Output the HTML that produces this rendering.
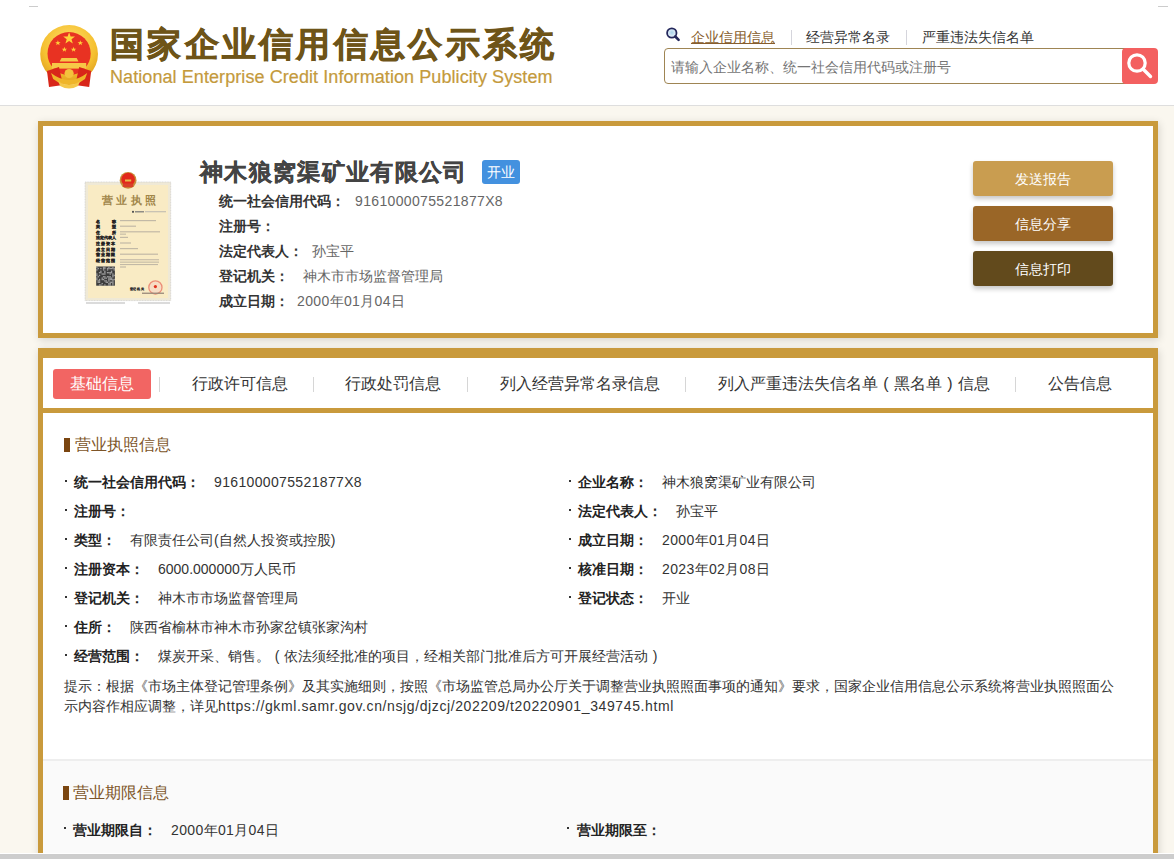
<!DOCTYPE html>
<html><head><meta charset="utf-8">
<style>
*{margin:0;padding:0;box-sizing:border-box}
html,body{width:1174px;height:859px;overflow:hidden}
body{position:relative;background:#faf7ef;font-family:"Liberation Sans",sans-serif;font-size:14px;color:#333}
.abs{position:absolute;white-space:nowrap}
#hdr{position:absolute;left:0;top:0;width:1174px;height:106px;background:#fff;border-bottom:1px solid #dedede}
.title{left:110px;top:24px;font-size:34px;font-weight:bold;color:#6e5418;line-height:40px;letter-spacing:3.3px;-webkit-text-stroke:0.7px #6e5418}
.etitle{left:110px;top:66px;font-size:18px;color:#c49a3c;line-height:22px;letter-spacing:0.08px;-webkit-text-stroke:0.2px #c49a3c}
.hlink{top:28px;font-size:14px;line-height:18px;color:#333}
.hsep{top:30px;width:1px;height:15px;background:#d5d5dc}
#search{position:absolute;left:664px;top:48px;width:470px;height:36px;border:1px solid #9f8553;border-radius:4px;background:#fff}
#sbtn{position:absolute;left:1122px;top:48px;width:36px;height:36px;background:#f36060;border-radius:4px}
.ph{left:671px;top:58px;font-size:14px;line-height:18px;color:#757575}
.card{position:absolute;left:38px;width:1120px;background:#fff;border:5px solid #c99a3c;box-shadow:1px 2px 8px rgba(0,0,0,.15)}
#c1{top:121px;height:217px}
#c2{top:348px;height:520px;border-top-width:10px}
.ctitle{left:200px;top:157px;font-size:23px;font-weight:bold;color:#444;line-height:30px;letter-spacing:1.35px;-webkit-text-stroke:0.4px #444}
.badge{position:absolute;left:482px;top:160px;width:38px;height:24px;background:#4391df;border-radius:3px;color:#fff;font-size:14px;line-height:24px;text-align:center}
.r{font-size:14px;line-height:18px}
.r b{color:#333}
.r span{color:#666}
.btn{position:absolute;left:973px;width:140px;height:35px;border-radius:3px;color:#fff;font-size:14px;line-height:33px;padding-top:2px;text-align:center;box-shadow:0 3px 5px rgba(0,0,0,.22)}
.tabbar{position:absolute;left:43px;top:408px;width:1110px;height:5px;background:#c99a3c}
.tab{top:374px;font-size:16px;line-height:20px;color:#333}
.tsep{top:377px;width:1px;height:15px;background:#d6d6d6}
#tab1{position:absolute;left:53px;top:369px;width:98px;height:30px;background:#f26563;border-radius:3px;color:#fff;font-size:16px;line-height:30px;text-align:center}
.sh{font-size:16px;line-height:20px;color:#7d5528}
.shbar{position:absolute;width:6px;height:14px;background:#7a4510}
.row{font-size:14px;line-height:18px;color:#333}
.row b{font-weight:bold;color:#222}
.dot{position:absolute;width:2px;height:2px;background:#333}
#sec2{position:absolute;left:43px;top:759px;width:1110px;height:100px;background:#fafafa;border-top:2px solid #eee}
#scroll{position:absolute;left:0;top:853px;width:1174px;height:6px;background:#cdcdcd;border-top:1px solid #fff}
.num{letter-spacing:0.35px}
.pc{display:inline-block;width:1em;text-align:center}
</style></head><body>
<div id="hdr"></div>
<div class="abs" style="left:29px;top:6px;width:9px;height:1px;background:#ccc"></div>
<div class="abs" style="left:1158px;top:6px;width:10px;height:1px;background:#ccc"></div>

<!-- emblem -->
<svg class="abs" style="left:30px;top:15px" width="80" height="80" viewBox="0 0 80 80">
  <defs>
    <radialGradient id="gold" cx="50%" cy="35%" r="65%"><stop offset="0" stop-color="#ffe070"/><stop offset="0.7" stop-color="#f5c030"/><stop offset="1" stop-color="#e0a020"/></radialGradient>
  </defs>
  <circle cx="39.1" cy="39" r="28.9" fill="url(#gold)"/>
  <circle cx="39.1" cy="38.6" r="21.6" fill="#e83222"/>
  <polygon points="39.1,17.3 40.6,21.6 45,21.6 41.5,24.3 42.8,28.6 39.1,26 35.4,28.6 36.7,24.3 33.2,21.6 37.6,21.6" fill="#ffd23a"/>
  <polygon points="27.9,25.3 28.6,27.2 30.6,27.2 29,28.4 29.6,30.3 27.9,29.1 26.2,30.3 26.8,28.4 25.2,27.2 27.2,27.2" fill="#ffd23a"/>
  <polygon points="50.3,25.3 51,27.2 53,27.2 51.4,28.4 52,30.3 50.3,29.1 48.6,30.3 49.2,28.4 47.6,27.2 49.6,27.2" fill="#ffd23a"/>
  <polygon points="34.4,31.8 35.1,33.7 37.1,33.7 35.5,34.9 36.1,36.8 34.4,35.6 32.7,36.8 33.3,34.9 31.7,33.7 33.7,33.7" fill="#ffd23a"/>
  <polygon points="43.6,31.8 44.3,33.7 46.3,33.7 44.7,34.9 45.3,36.8 43.6,35.6 41.9,36.8 42.5,34.9 40.9,33.7 42.9,33.7" fill="#ffd23a"/>
  <path d="M31.5 43 L46.7 43 L48.5 46.5 L29.7 46.5 Z" fill="#f7c847"/>
  <rect x="22" y="48" width="34.2" height="5.6" fill="#f7c847"/>
  <path d="M17 56 L29 52 L33 70 L19 72 Z" fill="#d8261a"/>
  <path d="M61.2 56 L49.2 52 L45.2 70 L59.2 72 Z" fill="#d8261a"/>
  <path d="M21 58 Q39 72 57.2 58 L55 64 Q39 76 23.2 64 Z" fill="#efb52a"/>
  <circle cx="39.1" cy="58.5" r="4.6" fill="#f4c23c"/>
  <path d="M28 66 Q39 74 50.2 66 L48 71 Q39 76 30.2 71 Z" fill="#f5c84a"/>
</svg>
<div class="abs title">国家企业信用信息公示系统</div>
<div class="abs etitle">National Enterprise Credit Information Publicity System</div>

<!-- header right -->
<svg class="abs" style="left:666px;top:26.5px" width="15" height="15" viewBox="0 0 15 15">
  <defs><radialGradient id="lens" cx="50%" cy="45%" r="55%"><stop offset="0" stop-color="#a9d3ea"/><stop offset="1" stop-color="#f2f6ff"/></radialGradient></defs>
  <circle cx="5.8" cy="6" r="4.7" fill="url(#lens)" stroke="#24285c" stroke-width="1.8"/>
  <line x1="9.3" y1="9.5" x2="12.6" y2="12.8" stroke="#24285c" stroke-width="2.6" stroke-linecap="round"/>
</svg>
<div class="abs hlink" style="left:691px;color:#875d2c;text-decoration:underline">企业信用信息</div>
<div class="abs hsep" style="left:791px"></div>
<div class="abs hlink" style="left:806px">经营异常名录</div>
<div class="abs hsep" style="left:906px"></div>
<div class="abs hlink" style="left:922px">严重违法失信名单</div>
<div id="search"></div>
<div class="abs ph">请输入企业名称、统一社会信用代码或注册号</div>
<div id="sbtn"><svg width="36" height="36" viewBox="0 0 36 36" style="position:absolute;left:0;top:0">
  <circle cx="15" cy="15" r="8.2" fill="none" stroke="#fff" stroke-width="3.2"/>
  <line x1="21.5" y1="21.5" x2="28.5" y2="28.5" stroke="#fff" stroke-width="3.4" stroke-linecap="round"/>
</svg></div>

<!-- card 1 -->
<div class="card" id="c1"></div>
<svg class="abs" style="left:80px;top:165px" width="100" height="142" viewBox="0 0 100 142">
    <rect x="5.1" y="17" width="85.6" height="118.6" fill="#efe9d6" stroke="#cfcfcf" stroke-width="0.8" stroke-dasharray="1 0.6"/>
  <rect x="8" y="20" width="80" height="113" fill="#f9ebc4"/>
  <circle cx="48.1" cy="15.3" r="8.4" fill="#c8903a"/>
  <circle cx="48.1" cy="14.6" r="6.8" fill="#e2281b"/>
  <rect x="43" y="18.6" width="10.2" height="3.6" rx="1" fill="#d8402a"/>
  <rect x="45" y="14.5" width="6.2" height="2" fill="#e7b94a"/>
  <text x="21.5" y="39.2" font-size="10.5" font-weight="bold" letter-spacing="3.6" fill="#a08548" font-family="Liberation Serif, serif">营业执照</text>
  <rect x="52" y="45.9" width="2" height="1.8" fill="#555"/>
  <rect x="55" y="46.2" width="9" height="1.2" fill="#777"/>
  <rect x="65" y="46.4" width="21" height="0.8" fill="#aaa"/>
  <g font-size="4.2" font-weight="bold" fill="#222" stroke="#222" stroke-width="0.25" font-family="Liberation Sans, sans-serif">
    <text x="15.5" y="57.6">名</text><text x="32.3" y="57.6">称</text>
    <text x="15.5" y="63.2">类</text><text x="32.3" y="63.2">型</text>
    <text x="15.5" y="68.8">住</text><text x="32.3" y="68.8">所</text>
    <text x="15.5" y="74.4" letter-spacing="0">法定代表人</text>
    <text x="15.5" y="80" letter-spacing="1.2">注册资本</text>
    <text x="15.5" y="85.6" letter-spacing="1.2">成立日期</text>
    <text x="15.5" y="91.2" letter-spacing="1.2">营业期限</text>
    <text x="15.5" y="96.8" letter-spacing="1.2">经营范围</text>
  </g>
  <g fill="#c2b9a6">
    <rect x="40" y="55" width="36" height="1.2"/>
    <rect x="40" y="60.6" width="16" height="1.2"/>
    <rect x="40" y="66.2" width="40" height="1.2"/><rect x="40" y="68.6" width="6" height="1.1"/>
    <rect x="40" y="71.8" width="8" height="1.2"/>
    <rect x="40" y="77.4" width="11" height="1.2"/>
    <rect x="40" y="83" width="18" height="1.2"/>
    <rect x="40" y="88.6" width="38" height="1.2"/>
    <rect x="40" y="94.2" width="39" height="1.1"/><rect x="40" y="96.6" width="39" height="1.1"/><rect x="40" y="99" width="38" height="1.1"/><rect x="40" y="101.4" width="6" height="1.2"/>
  </g>
  <rect x="16.2" y="101.5" width="18.7" height="19.2" fill="#3c3c3c"/>
  <g fill="#a0a0a0"><rect x="16.20" y="101.50" width="1.34" height="1.37"/><rect x="16.20" y="104.24" width="1.34" height="1.37"/><rect x="16.20" y="108.36" width="1.34" height="1.37"/><rect x="16.20" y="109.73" width="1.34" height="1.37"/><rect x="16.20" y="112.47" width="1.34" height="1.37"/><rect x="16.20" y="113.84" width="1.34" height="1.37"/><rect x="17.54" y="102.87" width="1.34" height="1.37"/><rect x="17.54" y="111.10" width="1.34" height="1.37"/><rect x="17.54" y="115.21" width="1.34" height="1.37"/><rect x="17.54" y="116.59" width="1.34" height="1.37"/><rect x="18.87" y="106.99" width="1.34" height="1.37"/><rect x="18.87" y="109.73" width="1.34" height="1.37"/><rect x="18.87" y="113.84" width="1.34" height="1.37"/><rect x="18.87" y="115.21" width="1.34" height="1.37"/><rect x="18.87" y="116.59" width="1.34" height="1.37"/><rect x="18.87" y="119.33" width="1.34" height="1.37"/><rect x="20.21" y="102.87" width="1.34" height="1.37"/><rect x="20.21" y="105.61" width="1.34" height="1.37"/><rect x="20.21" y="106.99" width="1.34" height="1.37"/><rect x="20.21" y="119.33" width="1.34" height="1.37"/><rect x="21.54" y="108.36" width="1.34" height="1.37"/><rect x="21.54" y="112.47" width="1.34" height="1.37"/><rect x="21.54" y="113.84" width="1.34" height="1.37"/><rect x="21.54" y="117.96" width="1.34" height="1.37"/><rect x="22.88" y="101.50" width="1.34" height="1.37"/><rect x="22.88" y="102.87" width="1.34" height="1.37"/><rect x="22.88" y="104.24" width="1.34" height="1.37"/><rect x="22.88" y="108.36" width="1.34" height="1.37"/><rect x="22.88" y="111.10" width="1.34" height="1.37"/><rect x="22.88" y="113.84" width="1.34" height="1.37"/><rect x="24.21" y="101.50" width="1.34" height="1.37"/><rect x="24.21" y="102.87" width="1.34" height="1.37"/><rect x="24.21" y="105.61" width="1.34" height="1.37"/><rect x="24.21" y="106.99" width="1.34" height="1.37"/><rect x="24.21" y="108.36" width="1.34" height="1.37"/><rect x="24.21" y="111.10" width="1.34" height="1.37"/><rect x="24.21" y="112.47" width="1.34" height="1.37"/><rect x="24.21" y="115.21" width="1.34" height="1.37"/><rect x="24.21" y="119.33" width="1.34" height="1.37"/><rect x="25.55" y="112.47" width="1.34" height="1.37"/><rect x="25.55" y="115.21" width="1.34" height="1.37"/><rect x="25.55" y="116.59" width="1.34" height="1.37"/><rect x="26.89" y="102.87" width="1.34" height="1.37"/><rect x="26.89" y="104.24" width="1.34" height="1.37"/><rect x="26.89" y="106.99" width="1.34" height="1.37"/><rect x="26.89" y="111.10" width="1.34" height="1.37"/><rect x="26.89" y="116.59" width="1.34" height="1.37"/><rect x="28.22" y="101.50" width="1.34" height="1.37"/><rect x="28.22" y="102.87" width="1.34" height="1.37"/><rect x="28.22" y="106.99" width="1.34" height="1.37"/><rect x="28.22" y="111.10" width="1.34" height="1.37"/><rect x="28.22" y="112.47" width="1.34" height="1.37"/><rect x="28.22" y="113.84" width="1.34" height="1.37"/><rect x="28.22" y="115.21" width="1.34" height="1.37"/><rect x="28.22" y="117.96" width="1.34" height="1.37"/><rect x="28.22" y="119.33" width="1.34" height="1.37"/><rect x="29.56" y="102.87" width="1.34" height="1.37"/><rect x="29.56" y="106.99" width="1.34" height="1.37"/><rect x="29.56" y="108.36" width="1.34" height="1.37"/><rect x="29.56" y="111.10" width="1.34" height="1.37"/><rect x="29.56" y="112.47" width="1.34" height="1.37"/><rect x="29.56" y="113.84" width="1.34" height="1.37"/><rect x="29.56" y="116.59" width="1.34" height="1.37"/><rect x="29.56" y="117.96" width="1.34" height="1.37"/><rect x="29.56" y="119.33" width="1.34" height="1.37"/><rect x="30.89" y="102.87" width="1.34" height="1.37"/><rect x="30.89" y="105.61" width="1.34" height="1.37"/><rect x="30.89" y="106.99" width="1.34" height="1.37"/><rect x="30.89" y="112.47" width="1.34" height="1.37"/><rect x="30.89" y="113.84" width="1.34" height="1.37"/><rect x="30.89" y="116.59" width="1.34" height="1.37"/><rect x="32.23" y="101.50" width="1.34" height="1.37"/><rect x="32.23" y="102.87" width="1.34" height="1.37"/><rect x="32.23" y="108.36" width="1.34" height="1.37"/><rect x="32.23" y="109.73" width="1.34" height="1.37"/><rect x="32.23" y="111.10" width="1.34" height="1.37"/><rect x="32.23" y="113.84" width="1.34" height="1.37"/><rect x="32.23" y="115.21" width="1.34" height="1.37"/><rect x="32.23" y="116.59" width="1.34" height="1.37"/><rect x="32.23" y="117.96" width="1.34" height="1.37"/><rect x="32.23" y="119.33" width="1.34" height="1.37"/><rect x="33.56" y="102.87" width="1.34" height="1.37"/><rect x="33.56" y="104.24" width="1.34" height="1.37"/><rect x="33.56" y="109.73" width="1.34" height="1.37"/><rect x="33.56" y="113.84" width="1.34" height="1.37"/></g>
  <text x="49.5" y="125" font-size="3.4" font-weight="bold" letter-spacing="0.8" fill="#333" stroke="#333" stroke-width="0.2" font-family="Liberation Sans, sans-serif">登记机关</text>
  <circle cx="75.4" cy="122.4" r="6.6" fill="#f7dcc4" stroke="#ec8f78" stroke-width="1.3"/>
  <circle cx="75.4" cy="121.6" r="1.6" fill="#e0301e"/>
  <rect x="62" y="127.6" width="22" height="1.3" fill="#9a8a7a"/>
  <rect x="6" y="137.4" width="39" height="1.2" fill="#c4c4c4"/>
  <rect x="58" y="137.4" width="32" height="1.2" fill="#c4c4c4"/>
</svg>
<div class="abs ctitle">神木狼窝渠矿业有限公司</div>
<div class="badge">开业</div>
<div class="abs r" style="left:219px;top:192px"><b>统一社会信用代码：</b></div>
<div class="abs r num" style="left:355px;top:192px;color:#666">9161000075521877X8</div>
<div class="abs r" style="left:219px;top:217px"><b>注册号：</b></div>
<div class="abs r" style="left:219px;top:242px"><b>法定代表人：</b></div>
<div class="abs r" style="left:312px;top:242px;color:#666">孙宝平</div>
<div class="abs r" style="left:219px;top:267px"><b>登记机关：</b></div>
<div class="abs r" style="left:303px;top:267px;color:#666">神木市市场监督管理局</div>
<div class="abs r" style="left:219px;top:292px"><b>成立日期：</b></div>
<div class="abs r num" style="left:297px;top:292px;color:#666">2000年01月04日</div>
<div class="btn" style="top:161px;background:#c99d50">发送报告</div>
<div class="btn" style="top:206px;background:#9a6627">信息分享</div>
<div class="btn" style="top:251px;background:#624a1c">信息打印</div>

<!-- card 2 -->
<div class="card" id="c2"></div>
<div id="tab1">基础信息</div>
<div class="abs tsep" style="left:159px"></div>
<div class="abs tab" style="left:192px">行政许可信息</div>
<div class="abs tsep" style="left:313px"></div>
<div class="abs tab" style="left:345px">行政处罚信息</div>
<div class="abs tsep" style="left:467px"></div>
<div class="abs tab" style="left:500px">列入经营异常名录信息</div>
<div class="abs tsep" style="left:685px"></div>
<div class="abs tab" style="left:718px">列入严重违法失信名单<span class="pc">(</span>黑名单<span class="pc">)</span>信息</div>
<div class="abs tsep" style="left:1015px"></div>
<div class="abs tab" style="left:1048px">公告信息</div>
<div class="tabbar"></div>

<div class="shbar" style="left:64px;top:438px"></div>
<div class="abs sh" style="left:75px;top:435px">营业执照信息</div>

<div class="dot" style="left:65px;top:480px"></div>
<div class="abs row" style="left:74px;top:473px"><b>统一社会信用代码：</b></div>
<div class="abs row num" style="left:214px;top:473px">9161000075521877X8</div>
<div class="dot" style="left:569px;top:480px"></div>
<div class="abs row" style="left:578px;top:473px"><b>企业名称：</b></div>
<div class="abs row" style="left:662px;top:473px">神木狼窝渠矿业有限公司</div>

<div class="dot" style="left:65px;top:509px"></div>
<div class="abs row" style="left:74px;top:502px"><b>注册号：</b></div>
<div class="dot" style="left:569px;top:509px"></div>
<div class="abs row" style="left:578px;top:502px"><b>法定代表人：</b></div>
<div class="abs row" style="left:676px;top:502px">孙宝平</div>

<div class="dot" style="left:65px;top:538px"></div>
<div class="abs row" style="left:74px;top:531px"><b>类型：</b></div>
<div class="abs row" style="left:130px;top:531px">有限责任公司(自然人投资或控股)</div>
<div class="dot" style="left:569px;top:538px"></div>
<div class="abs row" style="left:578px;top:531px"><b>成立日期：</b></div>
<div class="abs row num" style="left:662px;top:531px">2000年01月04日</div>

<div class="dot" style="left:65px;top:567px"></div>
<div class="abs row" style="left:74px;top:560px"><b>注册资本：</b></div>
<div class="abs row" style="left:158px;top:560px">6000.000000万人民币</div>
<div class="dot" style="left:569px;top:567px"></div>
<div class="abs row" style="left:578px;top:560px"><b>核准日期：</b></div>
<div class="abs row num" style="left:662px;top:560px">2023年02月08日</div>

<div class="dot" style="left:65px;top:596px"></div>
<div class="abs row" style="left:74px;top:589px"><b>登记机关：</b></div>
<div class="abs row" style="left:158px;top:589px">神木市市场监督管理局</div>
<div class="dot" style="left:569px;top:596px"></div>
<div class="abs row" style="left:578px;top:589px"><b>登记状态：</b></div>
<div class="abs row" style="left:662px;top:589px">开业</div>

<div class="dot" style="left:65px;top:625px"></div>
<div class="abs row" style="left:74px;top:618px"><b>住所：</b></div>
<div class="abs row" style="left:130px;top:618px">陕西省榆林市神木市孙家岔镇张家沟村</div>

<div class="dot" style="left:65px;top:654px"></div>
<div class="abs row" style="left:74px;top:647px"><b>经营范围：</b></div>
<div class="abs row" style="left:158px;top:647px">煤炭开采、销售。<span class="pc">(</span>依法须经批准的项目，经相关部门批准后方可开展经营活动<span class="pc">)</span></div>

<div class="abs row" style="left:64px;top:676px;line-height:20px">提示：根据《市场主体登记管理条例》及其实施细则，按照《市场监管总局办公厅关于调整营业执照照面事项的通知》要求，国家企业信用信息公示系统将营业执照照面公<br>示内容作相应调整，详见<span style="letter-spacing:0.61px">https://gkml.samr.gov.cn/nsjg/djzcj/202209/t20220901_349745.html</span></div>

<div id="sec2"></div>
<div class="shbar" style="left:63px;top:786px"></div>
<div class="abs sh" style="left:73px;top:783px">营业期限信息</div>
<div class="dot" style="left:64px;top:827px"></div>
<div class="abs row" style="left:73px;top:821px"><b>营业期限自：</b></div>
<div class="abs row num" style="left:171px;top:821px">2000年01月04日</div>
<div class="dot" style="left:567px;top:827px"></div>
<div class="abs row" style="left:577px;top:821px"><b>营业期限至：</b></div>

<div id="scroll"></div>
</body></html>
